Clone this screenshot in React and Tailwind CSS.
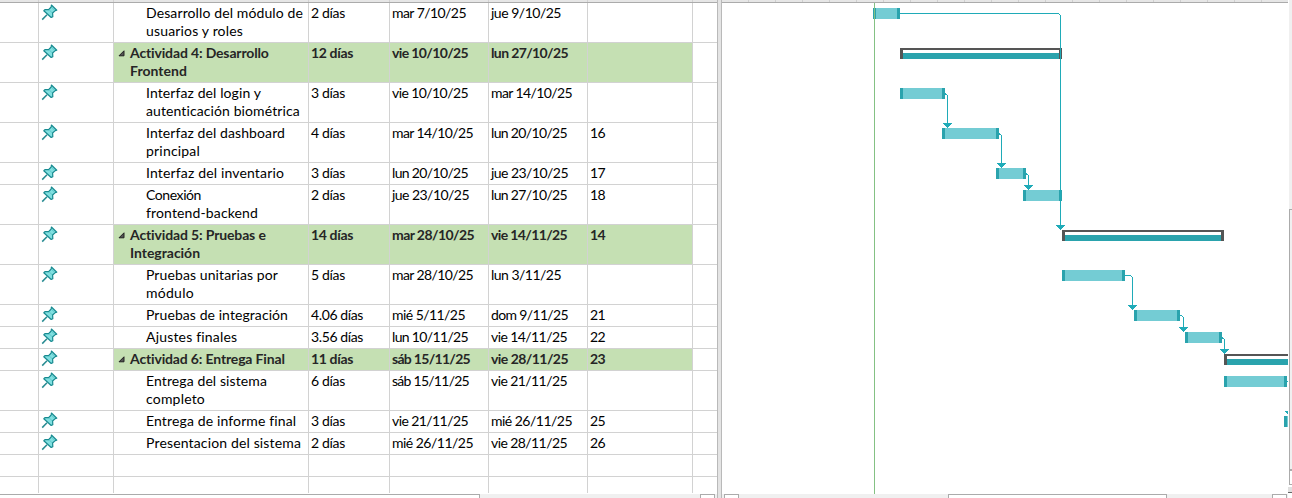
import React from 'react';

const rows = [
  { h: 'h-[40px]', name: [['Desarrollo del módulo de', 157], ['usuarios y roles', 97]], d: ['2 días', 34], s: ['mar 7/10/25', 74], e: ['jue 9/10/25', 70] },
  { h: 'h-[40px]', sum: true, name: [['Actividad 4: Desarrollo', 139], ['Frontend', 57]], d: ['12 días', 42], s: ['vie 10/10/25', 76], e: ['lun 27/10/25', 77] },
  { h: 'h-[40px]', name: [['Interfaz del login y', 115], ['autenticación biométrica', 154]], d: ['3 días', 34], s: ['vie 10/10/25', 76], e: ['mar 14/10/25', 81] },
  { h: 'h-[40px]', name: [['Interfaz del dashboard', 139], ['principal', 54]], d: ['4 días', 34], s: ['mar 14/10/25', 81], e: ['lun 20/10/25', 76], p: '16' },
  { h: 'h-[22px]', name: [['Interfaz del inventario', 138]], d: ['3 días', 34], s: ['lun 20/10/25', 76], e: ['jue 23/10/25', 77], p: '17' },
  { h: 'h-[40px]', name: [['Conexión', 55], ['frontend-backend', 112]], d: ['2 días', 34], s: ['jue 23/10/25', 77], e: ['lun 27/10/25', 76], p: '18' },
  { h: 'h-[40px]', sum: true, name: [['Actividad 5: Pruebas e', 136], ['Integración', 70]], d: ['14 días', 42], s: ['mar 28/10/25', 82], e: ['vie 14/11/25', 76], p: '14' },
  { h: 'h-[40px]', name: [['Pruebas unitarias por', 132], ['módulo', 48]], d: ['5 días', 34], s: ['mar 28/10/25', 81], e: ['lun 3/11/25', 70] },
  { h: 'h-[22px]', name: [['Pruebas de integración', 142]], d: ['4.06 días', 52], s: ['mié 5/11/25', 73], e: ['dom 9/11/25', 77], p: '21' },
  { h: 'h-[22px]', name: [['Ajustes finales', 91]], d: ['3.56 días', 52], s: ['lun 10/11/25', 76], e: ['vie 14/11/25', 76], p: '22' },
  { h: 'h-[22px]', sum: true, name: [['Actividad 6: Entrega Final', 155]], d: ['11 días', 42], s: ['sáb 15/11/25', 78], e: ['vie 28/11/25', 77], p: '23' },
  { h: 'h-[40px]', name: [['Entrega del sistema', 121], ['completo', 59]], d: ['6 días', 34], s: ['sáb 15/11/25', 77], e: ['vie 21/11/25', 76] },
  { h: 'h-[22px]', name: [['Entrega de informe final', 150]], d: ['3 días', 34], s: ['vie 21/11/25', 76], e: ['mié 26/11/25', 81], p: '25' },
  { h: 'h-[22px]', name: [['Presentacion del sistema', 155]], d: ['2 días', 34], s: ['mié 26/11/25', 81], e: ['vie 28/11/25', 76], p: '26' },
];

// Spreads a line of real text over a fixed advance width.
function Line({ t, w }) {
  const ref = React.useRef(null);
  const [ls, setLs] = React.useState(0);
  React.useLayoutEffect(() => {
    const natural = ref.current.getBoundingClientRect().width;
    setLs((w - natural) / t.length);
  }, [t, w]);
  return (
    <span className="block h-[18px] whitespace-nowrap">
      <span ref={ref} style={{ letterSpacing: ls + 'px' }}>{t}</span>
    </span>
  );
}

function Pin() {
  return (
    <svg className="ml-[2px] mt-px block" width="17" height="17" viewBox="0 0 17 17">
      <path d="M1.2 15.6L6 10.8" stroke="#278b91" strokeWidth="1.5" fill="none" />
      <path d="M10.4 1L15.8 6.2L14.2 6.6L11.6 9L11.8 12.7L10.2 13.5L2.8 6.8L4.2 5.5L7.6 5.7L10.2 3Z" fill="#80dfe0" stroke="#188a90" strokeWidth="1.2" strokeLinejoin="round" />
      <path d="M8 5.7L11.2 8.8M10.2 3L13.8 6.5" stroke="#52bfc2" strokeWidth=".7" />
    </svg>
  );
}

const cell = 'shrink-0 border-r border-[#d2d2d2] overflow-hidden';

function Row({ r }) {
  const bg = r.sum ? ' bg-[#c5e0b3] font-bold text-[#262626]' : '';
  return (
    <div className={'flex shrink-0 border-b border-[#d2d2d2] ' + r.h}>
      <div className={cell + ' w-[39px]'} />
      <div className={cell + ' w-[75px]'}><Pin /></div>
      <div className={cell + ' flex w-[195px] pt-px' + bg}>
        {r.sum
          ? <svg className="ml-[4px] mt-[6px] mr-[5px] block shrink-0" width="7" height="7"><path d="M6 .8V5.8H1Z" fill="#555" stroke="#222" /></svg>
          : <span className="w-[32px] shrink-0" />}
        <div>{r.name.map(([t, w]) => <Line key={t} t={t} w={w} />)}</div>
      </div>
      <div className={cell + ' w-[81px] pl-[2px] pt-px' + bg}><Line t={r.d[0]} w={r.d[1]} /></div>
      <div className={cell + ' w-[99px] pl-[2px] pt-px' + bg}><Line t={r.s[0]} w={r.s[1]} /></div>
      <div className={cell + ' w-[99px] pl-[2px] pt-px' + bg}><Line t={r.e[0]} w={r.e[1]} /></div>
      <div className={cell + ' w-[105px] pl-[2px] pt-px' + bg}>{r.p && <Line t={r.p} w={15} />}</div>
    </div>
  );
}

function Blank({ h }) {
  return (
    <div className={'flex shrink-0 ' + h}>
      <div className={cell + ' w-[39px]'} />
      <div className={cell + ' w-[75px]'} />
      <div className={cell + ' w-[195px]'} />
      <div className={cell + ' w-[81px]'} />
      <div className={cell + ' w-[99px]'} />
      <div className={cell + ' w-[99px]'} />
      <div className={cell + ' w-[105px]'} />
    </div>
  );
}

const tasks = [[873, 8, 27], [900, 88, 45], [942, 128, 57], [996, 168, 30], [1023, 190, 39], [1062, 270, 63], [1134, 310, 46], [1185, 332, 37], [1224, 376, 63], [1284, 416, 20]];
const summaries = [[900, 48, 162], [1062, 230, 162], [1224, 354, 100]];
const links = [
  'M900 13.5H1058.5L1060.5 15.5V226',
  'M945 93.5L947.5 95.5V124',
  'M999 133.5L1001.5 135.5V164',
  'M1026 173.5L1028.5 175.5V186',
  'M1125 275.5H1130.5L1132.5 277.5V306',
  'M1180 315.5H1181.5L1183.5 317.5V328',
  'M1222 337.5L1224.5 339.5V350',
  'M1287 381.5H1289',
];
const arrows = [[1060, 227], [947, 125], [1001, 165], [1028, 187], [1132, 307], [1183, 329], [1224, 351], [1289, 413]];
const ticks = [748, 775, 802, 829, 856, 883, 910, 937, 964, 991, 1018, 1045, 1072, 1099, 1126, 1153, 1180, 1207, 1234, 1261];

function Chart() {
  return (
    <svg className="block shrink-0" width="566" height="494" viewBox="722 0 566 494" shapeRendering="crispEdges">
      <rect x="722" y="0" width="566" height="2" fill="#e6e6e6" />
      {ticks.map((x) => <rect key={x} x={x} y="0" width="1" height="2" fill="#cfcfcf" />)}
      <rect x="722" y="2" width="566" height="1" fill="#ababab" />
      {tasks.map(([x, y, w]) => (
        <g key={x}>
          <rect x={x} y={y} width={w} height="11" fill="#74ccd4" />
          <rect x={x} y={y} width="3" height="11" fill="#2aa3ad" />
          <rect x={x + w - 3} y={y} width="3" height="11" fill="#2aa3ad" />
        </g>
      ))}
      {summaries.map(([x, y, w]) => (
        <g key={x}>
          <rect x={x} y={y} width={w} height="11" fill="#555" />
          <rect x={x + 3} y={y + 2} width={w - 6} height="3" fill="#fff" />
          <rect x={x + 3} y={y + 5} width={w - 6} height="6" fill="#2aa3ad" />
        </g>
      ))}
      {links.map((d) => <path key={d} d={d} fill="none" stroke="#1fabb8" />)}
      {arrows.map(([x, y]) => (
        <g key={x} fill="#1fabb8">
          <rect x={x - 4} y={y - 2} width="9" height="1" />
          <rect x={x - 3} y={y - 1} width="7" height="1" />
          <rect x={x - 2} y={y} width="5" height="1" />
          <rect x={x - 1} y={y + 1} width="3" height="1" />
          <rect x={x} y={y + 2} width="1" height="1" />
        </g>
      ))}
      <rect x="874" y="3" width="1" height="491" fill="#84c184" />
    </svg>
  );
}

export default function App() {
  return (
    <div className="flex h-[498px] w-[1292px] overflow-hidden bg-white font-['Lato',sans-serif] text-[14px] leading-[18px] text-black">
      <div className="flex w-[717px] shrink-0 flex-col overflow-hidden">
        <div className="h-[3px] shrink-0 overflow-hidden border-b border-[#ababab] bg-[#e6e6e6]"><Blank h="h-[2px]" /></div>
        {rows.map((r, i) => <Row key={i} r={r} />)}
        <div className="border-b border-[#d2d2d2]"><Blank h="h-[21px]" /></div>
        <Blank h="h-[16px]" />
        <div className="mt-px flex h-[4px] shrink-0 bg-[#f0f0f0]">
          <div className="w-[480px] border-r border-t border-[#ababab] bg-white" />
          <div className="ml-[220px] w-[15px] border-x border-t border-[#ababab] bg-white" />
        </div>
      </div>
      <div className="w-[5px] shrink-0 border-x border-[#b9b9b9] bg-[#e4e4e4]" />
      <div className="flex w-[566px] shrink-0 flex-col">
        <Chart />
        <div className="flex h-[4px] bg-[#f0f0f0]">
          <div className="ml-[2px] w-[15px] border-x border-t border-[#ababab] bg-white" />
          <div className="ml-[209px] w-[219px] border-x border-t border-[#ababab] bg-white" />
          <div className="ml-[105px] w-[15px] border-x border-t border-[#ababab] bg-white" />
        </div>
      </div>
      <div className="flex w-[4px] shrink-0 flex-col">
        <div className="ml-px h-[209px] bg-[#f0f0f0]" />
        <div className="ml-px h-[262px] border-b-2 border-l border-t border-[#ababab] bg-[#f0f0f0]" />
        <div className="ml-px h-[14px] border-b border-l border-[#ababab]" />
        <div className="mt-[2px] h-[6px] border-b border-[#666] bg-[#e0e0e0]" />
      </div>
    </div>
  );
}
